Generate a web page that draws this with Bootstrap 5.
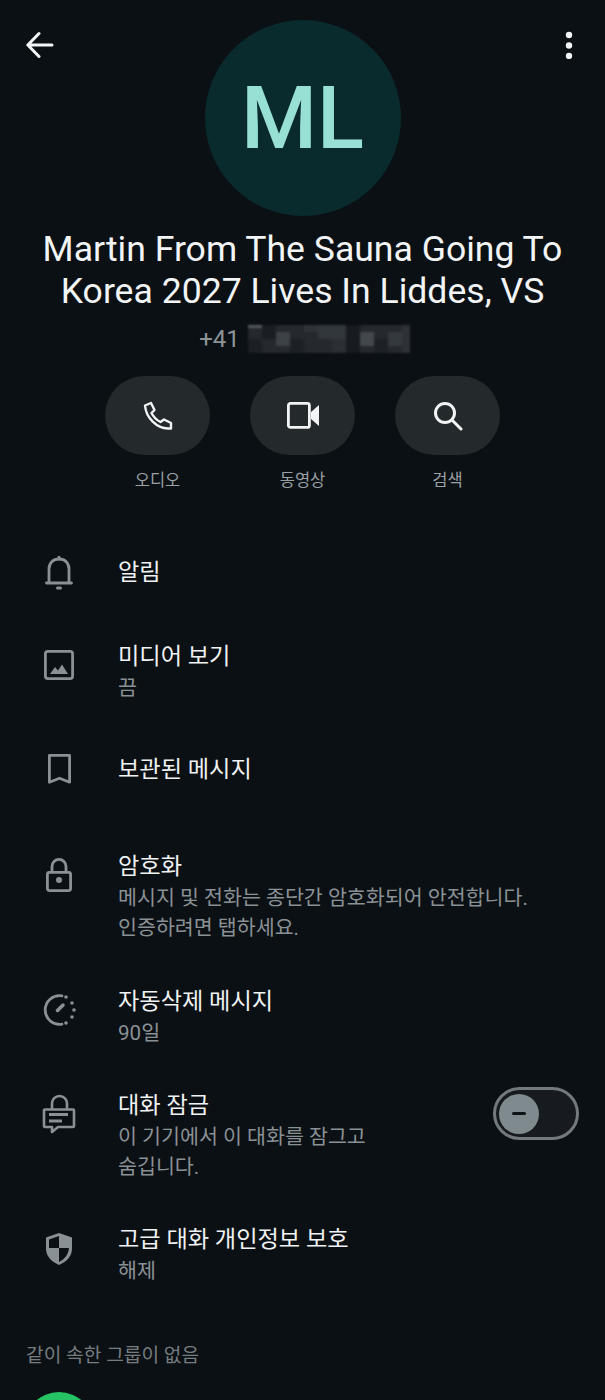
<!DOCTYPE html>
<html lang="ko">
<head>
  <meta charset="UTF-8" />
  <meta name="viewport" content="width=device-width, initial-scale=1.0"/>
  <title>Contact info</title>
  <link href="https://cdn.jsdelivr.net/npm/bootstrap@5.3.0/dist/css/bootstrap.min.css" rel="stylesheet"/>
  <style>
    html, body {
      height: 1400px;
      overflow: hidden;
    }
    body {
      background-color: #0b1014;
      font-family: "Roboto", "Noto Sans CJK KR", sans-serif;
      color: #f2f4f5;
    }
    .top-bar {
      height: 20px;
      padding: 0 31px 0 26px;
    }
    .top-icon {
      margin-top: 31px;
    }
    .avatar-circle {
      width: 196px;
      height: 196px;
      background-color: #0a2b2d;
      color: #98e0d3;
      font-size: 87px;
      font-weight: 500;
      line-height: 1;
    }
    .contact-name {
      font-size: 35.6px;
      line-height: 42px;
      margin-top: 12px;
      font-weight: 400;
    }
    .contact-phone {
      font-size: 24px;
      line-height: 30px;
      color: #8d9498;
      margin-top: 12px;
      padding-left: 4px;
    }
    .phone-blur {
      filter: blur(1.2px);
    }
    .action-row {
      margin-top: 22px;
      gap: 40px;
    }
    .action-item {
      width: 105px;
    }
    .action-pill {
      width: 105px;
      height: 79px;
      border-radius: 40px;
      background-color: #24292c;
    }
    .action-label {
      font-size: 16.5px;
      line-height: 20px;
      margin-top: 16px;
      color: #9aa0a4;
    }
    .info-list {
      margin-top: 65px;
    }
    .info-row {
      padding-left: 42px;
    }
    .info-icon {
      width: 76px;
      flex-shrink: 0;
    }
    .info-title {
      font-size: 23.2px;
      line-height: 32px;
      color: #f0f2f3;
    }
    .info-sub {
      font-size: 20.6px;
      line-height: 30px;
      margin-top: 1px;
      color: #8a9195;
    }
    .row-alert { height: 84px; }
    .row-media { height: 113px; }
    .row-saved { height: 97px; }
    .row-crypt { height: 135px; }
    .row-timer { height: 104px; }
    .row-chatlock { height: 134px; }
    .row-privacy { height: 86px; }
    .lock-toggle {
      width: 86px;
      height: 53px;
      border: 3px solid #737a7e;
      border-radius: 27px;
      background-color: #171b1f;
      right: 26px;
      top: -2px;
      padding-left: 3px;
    }
    .lock-knob {
      width: 40px;
      height: 40px;
      background-color: #7f8a8e;
    }
    .lock-dash {
      width: 14px;
      height: 3px;
      background-color: #0f1417;
    }
    .group-title {
      font-size: 19.2px;
      line-height: 28px;
      color: #767d81;
      padding-left: 26px;
      margin-top: 33px;
    }
    .group-row {
      padding-left: 24px;
      margin-top: 22px;
    }
    .group-avatar {
      width: 70px;
      height: 70px;
      background-color: #25c363;
    }
  </style>
</head>
<body>
  <div class="d-flex justify-content-between align-items-start top-bar">
    <svg class="top-icon" width="28" height="28" viewBox="0 0 28 28" fill="none" stroke="#f2f4f5" stroke-width="3" stroke-linecap="round" stroke-linejoin="round"><path d="M26 14H2M13 2.500 1.800 14 13 25.500"/></svg>
    <svg class="top-icon" width="10" height="28" viewBox="0 0 10 28" fill="#f2f4f5"><circle cx="5" cy="4" r="3.200"/><circle cx="5" cy="14.500" r="3.200"/><circle cx="5" cy="25" r="3.200"/></svg>
  </div>

  <div class="d-flex flex-column align-items-center">
    <div class="avatar-circle rounded-circle d-flex align-items-center justify-content-center">ML</div>
    <div class="contact-name text-center">Martin From The Sauna Going To<br>Korea 2027 Lives In Liddes, VS</div>
    <div class="contact-phone d-flex align-items-center">
      <span>+41</span>
      <svg width="162" height="28" viewBox="0 0 162 28" class="phone-blur ms-2">
        <rect width="162" height="28" fill="#25292d"/>
        <rect x="0" y="0" width="14" height="3" fill="#555a5e"/>
        <rect x="0" y="14" width="14" height="14" fill="#1c2024"/>
        <rect x="14" y="0" width="14" height="14" fill="#1a1e22"/>
        <rect x="28" y="7" width="14" height="14" fill="#3d4246"/>
        <rect x="42" y="14" width="14" height="14" fill="#1d2125"/>
        <rect x="56" y="0" width="14" height="7" fill="#2f3337"/>
        <rect x="70" y="0" width="28" height="14" fill="#32373b"/>
        <rect x="84" y="14" width="14" height="14" fill="#2b2f33"/>
        <rect x="98" y="0" width="14" height="28" fill="#171b1f"/>
        <rect x="112" y="7" width="14" height="14" fill="#43484c"/>
        <rect x="126" y="14" width="14" height="14" fill="#1d2125"/>
        <rect x="140" y="7" width="14" height="14" fill="#34393d"/>
        <rect x="154" y="0" width="8" height="28" fill="#2e3236"/>
      </svg>
    </div>

    <div class="action-row d-flex justify-content-center">
      <div class="action-item text-center">
        <div class="action-pill d-flex align-items-center justify-content-center">
          <svg width="30" height="30" viewBox="0 0 30 30" fill="none" stroke="#f2f4f5" stroke-width="2.400" stroke-linejoin="round"><path d="M2 4.500 8 2l3.500 7-3 3c2 4 5 7 9 9l3.500-2.500 7 3.500v5.500h-3C14 27.500 3 17 2 4.500Z"/></svg>
        </div>
        <div class="action-label">오디오</div>
      </div>
      <div class="action-item text-center">
        <div class="action-pill d-flex align-items-center justify-content-center">
          <svg width="32" height="27" viewBox="0 0 32 27"><rect x="1.400" y="1.400" width="21" height="24" rx="2" fill="none" stroke="#f2f4f5" stroke-width="2.800"/><path d="M24 10 32 3v21l-8-7Z" fill="#f2f4f5"/></svg>
        </div>
        <div class="action-label">동영상</div>
      </div>
      <div class="action-item text-center">
        <div class="action-pill d-flex align-items-center justify-content-center">
          <svg width="30" height="30" viewBox="0 0 30 30" fill="none" stroke="#f2f4f5" stroke-width="3" stroke-linecap="round"><circle cx="12" cy="12" r="9.500"/><path d="M19 19l9 9"/></svg>
        </div>
        <div class="action-label">검색</div>
      </div>
    </div>
  </div>

  <div class="info-list">
    <div class="info-row row-alert d-flex">
      <div class="info-icon">
        <svg width="34" height="36" viewBox="0 0 34 36" fill="none" stroke="#8a9195" stroke-width="2.800" stroke-linecap="round" stroke-linejoin="round"><path d="M7 26.500V13C7 7 11 3 17 3s10 4 10 10v13.500M4.500 27h25"/><path d="M17 1v2"/><path d="M15.500 32h3" stroke-width="3"/></svg>
      </div>
      <div><div class="info-title">알림</div></div>
    </div>

    <div class="info-row row-media d-flex">
      <div class="info-icon">
        <svg width="34" height="42" viewBox="0 0 34 42" fill="none"><rect x="3.400" y="11.400" width="27.200" height="27.200" rx="2.500" stroke="#8a9195" stroke-width="2.800"/><path d="M8 34 13 27l3 3.500 4-6 6 9.500Z" fill="#8a9195"/></svg>
      </div>
      <div>
        <div class="info-title">미디어 보기</div>
        <div class="info-sub">끔</div>
      </div>
    </div>

    <div class="info-row row-saved d-flex">
      <div class="info-icon">
        <svg width="34" height="32" viewBox="0 0 34 32" fill="none" stroke="#8a9195" stroke-width="2.800" stroke-linejoin="round"><path d="M7.400 2.400h20.200v26.800l-10.100-4-10.100 4Z"/></svg>
      </div>
      <div><div class="info-title">보관된 메시지</div></div>
    </div>

    <div class="info-row row-crypt d-flex">
      <div class="info-icon">
        <svg width="34" height="44" viewBox="0 0 34 44" fill="none" stroke="#8a9195" stroke-width="2.800"><rect x="5.400" y="22.400" width="23.200" height="18.200" rx="2"/><path d="M10 22v-5.600a7 7 0 0 1 14 0V22"/><circle cx="17" cy="30" r="3" fill="#8a9195" stroke="none"/></svg>
      </div>
      <div>
        <div class="info-title">암호화</div>
        <div class="info-sub">메시지 및 전화는 종단간 암호화되어 안전합니다.<br>인증하려면 탭하세요.</div>
      </div>
    </div>

    <div class="info-row row-timer d-flex">
      <div class="info-icon">
        <svg width="34" height="44" viewBox="0 0 34 44" fill="none" stroke="#8a9195" stroke-width="2.800" stroke-linecap="round"><path d="M20 10.800A14.400 14.400 0 1 0 20 39.200"/><path d="M15.500 25.500 21 20" stroke-width="3.500"/><g fill="#8a9195" stroke="none"><circle cx="24" cy="12" r="1.800"/><circle cx="30" cy="18" r="1.800"/><circle cx="32" cy="25" r="1.800"/><circle cx="30" cy="32" r="1.800"/><circle cx="24" cy="38" r="1.800"/></g></svg>
      </div>
      <div>
        <div class="info-title">자동삭제 메시지</div>
        <div class="info-sub">90일</div>
      </div>
    </div>

    <div class="info-row row-chatlock d-flex position-relative">
      <div class="info-icon">
        <svg width="34" height="46" viewBox="0 0 34 46" fill="none" stroke="#8a9195" stroke-width="2.600" stroke-linejoin="round"><path d="M10 20v-5.500a7.500 7.500 0 0 1 15 0V20"/><path d="M3 20.500h28a1 1 0 0 1 1 1V37a1 1 0 0 1-1 1H16l-6 5v-5H3a1 1 0 0 1-1-1V21.500a1 1 0 0 1 1-1Z"/><path d="M7 25.500h19M7 32h13" stroke-width="3"/></svg>
      </div>
      <div>
        <div class="info-title">대화 잠금</div>
        <div class="info-sub">이 기기에서 이 대화를 잠그고<br>숨깁니다.</div>
      </div>
      <div class="lock-toggle position-absolute d-flex align-items-center">
        <div class="lock-knob rounded-circle d-flex align-items-center justify-content-center"><div class="lock-dash rounded-pill"></div></div>
      </div>
    </div>

    <div class="info-row row-privacy d-flex">
      <div class="info-icon">
        <svg width="34" height="44" viewBox="0 0 34 44"><path d="M17 10 30 14.500v11c0 7.500-5 13-13 16.500C9 38.500 4 33 4 25.500v-11Z" fill="#8a9195"/><path d="M17 13 7 16.500V25h10ZM17 25h10c-.5 6-4 11-10 14Z" fill="#0b1014"/></svg>
      </div>
      <div>
        <div class="info-title">고급 대화 개인정보 보호</div>
        <div class="info-sub">해제</div>
      </div>
    </div>
  </div>

  <div class="group-title">같이 속한 그룹이 없음</div>
  <div class="group-row">
    <div class="group-avatar rounded-circle"></div>
  </div>

  <script src="https://cdn.jsdelivr.net/npm/bootstrap@5.3.0/dist/js/bootstrap.bundle.min.js"></script>
</body>
</html>
